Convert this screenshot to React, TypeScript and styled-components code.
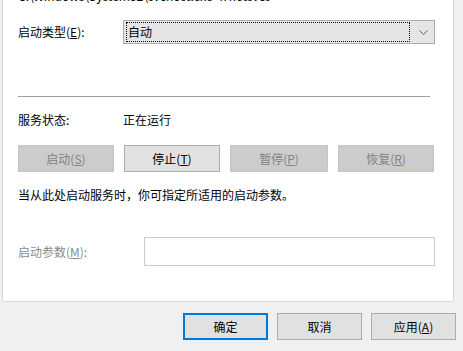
import styled, { createGlobalStyle } from "styled-components";

const GlobalStyle = createGlobalStyle`
    html, body {
        margin: 0;
        padding: 0;
        background: #f0f0f0;
        overflow: hidden;
    }
    body {
        font-family: "Noto Sans CJK SC", "Microsoft YaHei UI", sans-serif;
        font-size: 12px;
        color: #000;
    }
`;

const App = () => {
    return (
        <>
            <GlobalStyle />
            <Window>
                <Panel>
                    <PathText>C:\Windows\System32\svchost.exe -k netsvcs</PathText>
                    <FieldRow top={17} height={24}>
                        <Label>启动类型(<u>E</u>):</Label>
                        <Combo>
                            <ComboValue>自动</ComboValue>
                            <Chevron width="9" height="5" viewBox="0 0 9 5">
                                <polyline points="0.5,0.5 4.5,4.5 8.5,0.5" fill="none" stroke="#5a5a5a" strokeWidth="1" />
                            </Chevron>
                        </Combo>
                    </FieldRow>
                    <Separator />
                    <FieldRow top={14} height={18}>
                        <Label>服务状态:</Label>
                        <StatusValue>正在运行</StatusValue>
                    </FieldRow>
                    <ButtonRow>
                        <ServiceButton disabled>启动(<u>S</u>)</ServiceButton>
                        <ServiceButton>停止(<u>T</u>)</ServiceButton>
                        <ServiceButton disabled wide>暂停(<u>P</u>)</ServiceButton>
                        <ServiceButton disabled>恢复(<u>R</u>)</ServiceButton>
                    </ButtonRow>
                    <Hint>当从此处启动服务时，你可指定所适用的启动参数。</Hint>
                    <FieldRow top={34} height={29}>
                        <Label muted>启动参数(<u>M</u>):</Label>
                        <ParamInput />
                    </FieldRow>
                </Panel>
                <Footer>
                    <DialogButton primary>确定</DialogButton>
                    <DialogButton>取消</DialogButton>
                    <DialogButton>应用(<u>A</u>)</DialogButton>
                </Footer>
            </Window>
        </>
    );
};

const Window = styled.div`
    width: 463px;
    height: 351px;
    display: flex;
    flex-direction: column;
`;

const Panel = styled.div`
    margin-left: 2px;
    width: 452px;
    height: 302px;
    background: #ffffff;
    border: 1px solid #d9d9d9;
    border-top: none;
    padding-left: 15px;
    box-sizing: border-box;
    display: flex;
    flex-direction: column;
    overflow: hidden;
`;

const PathText = styled.div`
    margin-top: -11px;
    height: 14px;
    line-height: 14px;
    white-space: nowrap;
`;

const FieldRow = styled.div<{ top: number; height: number }>`
    margin-top: ${(p) => p.top}px;
    height: ${(p) => p.height}px;
    flex-shrink: 0;
    display: flex;
    align-items: center;
`;

const Label = styled.div<{ muted?: boolean }>`
    width: 105px;
    flex-shrink: 0;
    color: ${(p) => (p.muted ? "#8a8a8a" : "#000")};
    line-height: 16px;
`;

const Combo = styled.div`
    width: 312px;
    height: 24px;
    box-sizing: border-box;
    background: #e5e5e5;
    border: 1px solid #adadad;
    display: flex;
    align-items: center;
    padding: 1px 4px 1px 2px;
`;

const ComboValue = styled.div`
    flex: 1;
    height: 20px;
    box-sizing: border-box;
    border: 1px dotted #000;
    line-height: 18px;
    padding-left: 1px;
`;

const Chevron = styled.svg`
    margin-left: 9px;
    margin-right: 2px;
`;

const Separator = styled.div`
    margin-top: 52px;
    width: 412px;
    height: 1px;
    flex-shrink: 0;
    background: #a0a0a0;
`;

const StatusValue = styled.div`
    line-height: 16px;
`;

const ButtonRow = styled.div`
    margin-top: 16px;
    width: 416px;
    flex-shrink: 0;
    display: flex;
    justify-content: space-between;
`;

const ServiceButton = styled.div<{ disabled?: boolean; wide?: boolean }>`
    width: ${(p) => (p.wide ? 98 : 96)}px;
    height: 27px;
    box-sizing: border-box;
    display: flex;
    align-items: center;
    justify-content: center;
    background: ${(p) => (p.disabled ? "#cccccc" : "#e1e1e1")};
    border: 1px solid ${(p) => (p.disabled ? "#c4c4c4" : "#adadad")};
    color: ${(p) => (p.disabled ? "#838383" : "#000")};
`;

const Hint = styled.div`
    margin-top: 15px;
    line-height: 16px;
    flex-shrink: 0;
`;

const ParamInput = styled.div`
    margin-left: 21px;
    width: 291px;
    height: 29px;
    box-sizing: border-box;
    border: 1px solid #cccccc;
    background: #fff;
`;

const Footer = styled.div`
    flex: 1;
    display: flex;
    justify-content: flex-end;
    gap: 9px;
    padding: 11px 7px 0 0;
`;

const DialogButton = styled.div<{ primary?: boolean }>`
    width: 85px;
    height: 27px;
    box-sizing: border-box;
    display: flex;
    align-items: center;
    justify-content: center;
    background: #e1e1e1;
    border: ${(p) => (p.primary ? "2px solid #0078d7" : "1px solid #adadad")};
`;

export default App;
